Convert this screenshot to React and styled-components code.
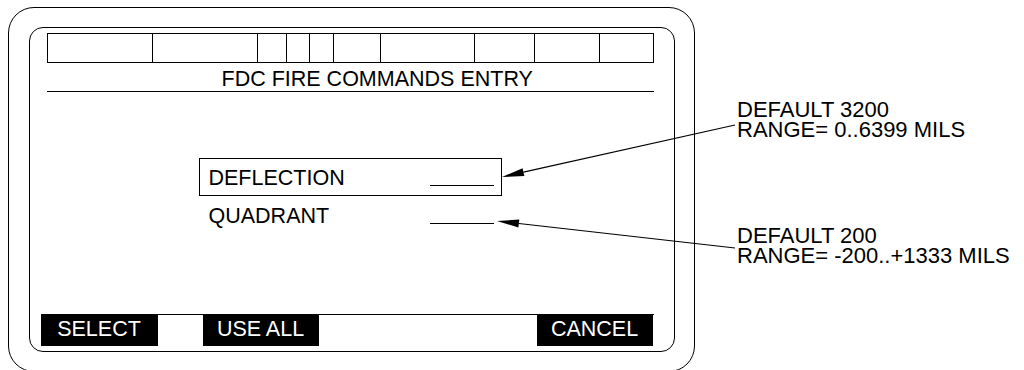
import React from "react";
import styled, { createGlobalStyle } from "styled-components";

const GlobalStyle = createGlobalStyle`
  html, body {
    margin: 0;
    padding: 0;
    background: #fff;
  }
  body {
    font-family: "Liberation Sans", Arial, sans-serif;
    color: #000;
  }
`;

const Page = styled.div`
  position: relative;
  display: flex;
  align-items: flex-start;
  width: 1024px;
  height: 370px;
  padding: 7px 0 0 8px;
  box-sizing: border-box;
  overflow: hidden;
  font-size: 21.5px;
  line-height: 22px;
`;

const Bezel = styled.div`
  flex: none;
  width: 687px;
  height: 365px;
  box-sizing: border-box;
  border: 1.5px solid #000;
  border-radius: 26px;
  padding: 19px 0 0 19.5px;
`;

const Screen = styled.div`
  display: flex;
  flex-direction: column;
  width: 646px;
  height: 325px;
  box-sizing: border-box;
  border: 1px solid #000;
  border-radius: 14px;
  padding: 5px 20px 5px 11px;
`;

const StatusBar = styled.div`
  display: grid;
  grid-template-columns: 104px 105px 29px 23px 24px 47px 94px 60px 65px 1fr;
  height: 30px;
  margin-left: 6px;
  box-sizing: border-box;
  border: 1px solid #000;
`;

const StatusCell = styled.div`
  border-left: ${(p) => (p.first ? "none" : "1px solid #000")};
`;

const Title = styled.div`
  margin: 5px 0 0 6px;
  padding: 0 0 1px 175px;
  border-bottom: 1px solid #000;
  white-space: nowrap;
`;

const Body = styled.div`
  flex: 1;
  padding: 66px 0 0 158px;
`;

const FieldRow = styled.div`
  display: flex;
  align-items: flex-start;
  width: 303px;
  box-sizing: border-box;
  padding: 8px 7px 6px 9px;
  border: 1px solid ${(p) => (p.selected ? "#000" : "transparent")};
`;

const FieldLabel = styled.span`
  flex: 1;
  white-space: nowrap;
`;

const Blank = styled.span`
  width: 64px;
  height: 18px;
  border-bottom: 1px solid #000;
`;

const SoftKeys = styled.div`
  display: flex;
  border-top: 1px solid #000;
  height: 31px;
`;

const SoftKey = styled.div`
  width: ${(p) => p.w}px;
  margin-left: ${(p) => p.gap || 0}px;
  background: #000;
  color: #fff;
  text-align: center;
  line-height: 29px;
  white-space: nowrap;
`;

const Notes = styled.div`
  display: flex;
  flex-direction: column;
  gap: 86px;
  padding: 92px 0 0 42px;
  font-size: 22px;
  white-space: nowrap;
`;

const Note = styled.div`
  display: flex;
  flex-direction: column;
`;

const NoteLine = styled.div`
  height: 20px;
  line-height: 21px;
`;

const Overlay = styled.svg`
  position: absolute;
  left: 0;
  top: 0;
  pointer-events: none;
`;

const Arrow = ({ tip, tail }) => {
  const dx = tail[0] - tip[0];
  const dy = tail[1] - tip[1];
  const len = Math.hypot(dx, dy);
  const ux = dx / len;
  const uy = dy / len;
  const bx = tip[0] + ux * 22;
  const by = tip[1] + uy * 22;
  const px = -uy * 4;
  const py = ux * 4;
  return (
    <g>
      <line x1={bx} y1={by} x2={tail[0]} y2={tail[1]} stroke="#000" strokeWidth="1.2" />
      <polygon
        points={`${tip[0]},${tip[1]} ${bx + px},${by + py} ${bx - px},${by - py}`}
        fill="#000"
      />
    </g>
  );
};

const statusCells = Array.from({ length: 10 }, (_, i) => i);

const notes = [
  ["DEFAULT 3200", "RANGE= 0..6399 MILS"],
  ["DEFAULT 200", "RANGE= -200..+1333 MILS"]
];

const App = () => (
  <>
    <GlobalStyle />
    <Page>
      <Bezel>
        <Screen>
          <StatusBar>
            {statusCells.map((i) => (
              <StatusCell key={i} first={i === 0} />
            ))}
          </StatusBar>
          <Title>FDC FIRE COMMANDS ENTRY</Title>
          <Body>
            <FieldRow selected>
              <FieldLabel>DEFLECTION</FieldLabel>
              <Blank />
            </FieldRow>
            <FieldRow>
              <FieldLabel>QUADRANT</FieldLabel>
              <Blank />
            </FieldRow>
          </Body>
          <SoftKeys>
            <SoftKey w={117}>SELECT</SoftKey>
            <SoftKey w={116} gap={45}>USE ALL</SoftKey>
            <SoftKey w={116} gap={218}>CANCEL</SoftKey>
          </SoftKeys>
        </Screen>
      </Bezel>
      <Notes>
        {notes.map((lines, i) => (
          <Note key={i}>
            {lines.map((line) => (
              <NoteLine key={line}>{line}</NoteLine>
            ))}
          </Note>
        ))}
      </Notes>
      <Overlay width="1024" height="370">
        <Arrow tip={[502, 177]} tail={[735, 125]} />
        <Arrow tip={[497, 221]} tail={[735, 248]} />
      </Overlay>
    </Page>
  </>
);

export default App;
